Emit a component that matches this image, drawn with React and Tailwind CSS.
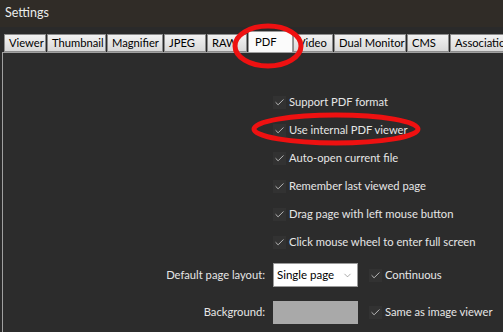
import React from "react";
import { Check, ChevronDown } from "lucide-react";

const tabs = [
  { name: "Viewer", w: 42 },
  { name: "Thumbnail", w: 59 },
  { name: "Magnifier", w: 56 },
  { name: "JPEG", w: 42 },
  { name: "RAW", w: 40 },
  { name: "PDF", w: 45, active: true },
  { name: "Video", w: 40 },
  { name: "Dual Monitor", w: 72 },
  { name: "CMS", w: 42 },
  { name: "Associations", w: 80 },
];

const options = [
  "Support PDF format",
  "Use internal PDF viewer",
  "Auto-open current file",
  "Remember last viewed page",
  "Drag page with left mouse button",
  "Click mouse wheel to enter full screen",
];

const CheckBox = ({ label }) => (
  <div className="flex items-center h-[28px]">
    <div className="w-[13px] h-[13px] bg-[#323232] flex items-center justify-center">
      <Check size={11} strokeWidth={1.6} color="#e8e8e8" />
    </div>
    <span className="ml-[3px] text-[11.2px] text-[#e6e6e6] whitespace-nowrap">{label}</span>
  </div>
);

export default function App() {
  return (
    <div
      className="relative w-[503px] h-[332px] overflow-hidden bg-[#2a2a2a]"
      style={{ fontFamily: 'Lato, "Liberation Sans", sans-serif' }}
    >
      <div className="h-[27px] bg-[#302c27] flex items-center pl-[5px] text-[12.5px] text-[#ececec]">
        Settings
      </div>

      {/* tab strip */}
      <div className="h-[25px] flex items-end pl-[4px]">
        {tabs.map((t) => (
          <div
            key={t.name}
            style={{ width: t.w }}
            className={
              t.active
                ? "shrink-0 h-[21px] bg-[#fbfbfb] border border-b-0 border-[#9a9a9a] flex items-center pl-[6px] text-[11.2px] text-black"
                : "shrink-0 h-[18px] bg-gradient-to-b from-[#f2f2f2] to-[#d9d9d9] border border-[#8c8c8c] mr-[1px] flex items-center pl-[4px] text-[11.2px] text-black whitespace-nowrap overflow-hidden"
            }
          >
            {t.name}
          </div>
        ))}
      </div>

      {/* panel */}
      <div className="ml-[2px] h-[280px] border-t border-l border-[#a0a0a0] bg-[#2c2c2c]">
        <div className="pl-[270px] pt-[35px]">
          {options.map((o) => (
            <CheckBox key={o} label={o} />
          ))}
        </div>

        <div className="mt-[6px] flex items-center h-[26px]">
          <div className="w-[262px] text-right text-[11.2px] text-[#e6e6e6]">Default page layout:</div>
          <div className="ml-[8px] w-[85px] h-[24px] bg-white border border-[#9a9a9a] flex items-center justify-between pl-[3px] pr-[4px]">
            <span className="text-[11.5px] text-black whitespace-nowrap">Single page</span>
            <ChevronDown size={11} strokeWidth={1.2} color="#666" />
          </div>
          <div className="ml-[11px]">
            <CheckBox label="Continuous" />
          </div>
        </div>

        <div className="mt-[12px] flex items-center h-[24px]">
          <div className="w-[262px] text-right text-[11.2px] text-[#e6e6e6]">Background:</div>
          <div className="ml-[8px] w-[85px] h-[23px] bg-[#a9a9a9]" />
          <div className="ml-[11px]">
            <CheckBox label="Same as image viewer" />
          </div>
        </div>
      </div>

      {/* red annotation ellipses */}
      <svg className="absolute left-0 top-0 pointer-events-none" width="503" height="332">
        <ellipse cx="268" cy="46" rx="33" ry="20" fill="none" stroke="#ee1111" strokeWidth="5" />
        <ellipse cx="336" cy="129" rx="82" ry="14" fill="none" stroke="#ee1111" strokeWidth="5" />
      </svg>
    </div>
  );
}
